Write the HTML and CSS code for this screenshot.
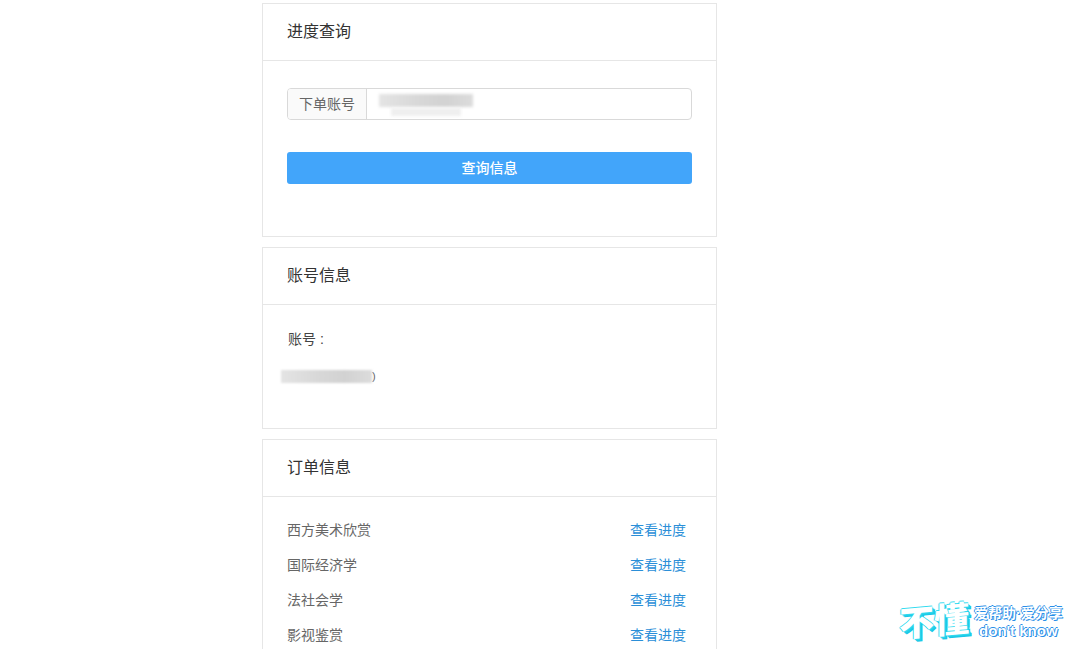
FILE: index.html
```html
<!DOCTYPE html>
<html lang="zh-CN">
<head>
<meta charset="utf-8">
<title>进度查询</title>
<link rel="stylesheet" href="styles.css">
</head>
<body>
<main class="column">
  <section class="card card-query">
    <h2 class="card-head">进度查询</h2>
    <div class="card-body">
      <div class="field">
        <span class="field-label">下单账号</span>
        <div class="field-input">
          <span class="smear smear-a"></span>
          <span class="smear smear-b"></span>
        </div>
      </div>
      <button class="btn" type="button"><span class="btn-text">查询信息</span></button>
    </div>
  </section>
  <section class="card card-account">
    <h2 class="card-head">账号信息</h2>
    <div class="card-body account-body">
      <p class="account-label">账号 :</p>
      <div class="account-value"><span class="smear smear-c"></span><span class="paren">)</span></div>
    </div>
  </section>
  <section class="card card-orders">
    <h2 class="card-head">订单信息</h2>
    <ul class="orders">
      <li class="order"><span>西方美术欣赏</span><a class="link" href="#">查看进度</a></li>
      <li class="order"><span>国际经济学</span><a class="link" href="#">查看进度</a></li>
      <li class="order"><span>法社会学</span><a class="link" href="#">查看进度</a></li>
      <li class="order"><span>影视鉴赏</span><a class="link" href="#">查看进度</a></li>
    </ul>
  </section>
</main>
<aside class="mark">
  <span class="mark-big">不懂</span>
  <span class="mark-side">
    <span class="mark-top">爱帮助·爱分享</span>
    <span class="mark-bottom">don't know</span>
  </span>
</aside>
</body>
</html>
```
FILE: styles.css
```css
* { box-sizing: border-box; }
html, body { height: 649px; overflow: hidden; }
body {
  margin: 0;
  background: #fff;
  color: #333;
  font-family: "Liberation Sans", "Noto Sans CJK SC", sans-serif;
  font-size: 14px;
}
.column {
  width: 455px;
  margin-left: 262px;
  padding-top: 3px;
  display: flex;
  flex-direction: column;
  gap: 10px;
}
.card {
  border: 1px solid #e6e6e6;
  background: #fff;
}
.card-query { height: 234px; }
.card-account { height: 182px; }
.card-orders { min-height: 220px; }
.card-head {
  margin: 0;
  height: 57px;
  padding-left: 24px;
  border-bottom: 1px solid #e6e6e6;
  font-size: 16px;
  font-weight: 400;
  line-height: 55px;
  color: #333;
}
.card-body { padding: 27px 24px 0; }
.field {
  display: flex;
  height: 32px;
  border: 1px solid #d9d9d9;
  border-radius: 4px;
  overflow: hidden;
}
.field-label {
  width: 79px;
  flex: none;
  border-right: 1px solid #d9d9d9;
  background: #fafafa;
  color: #666;
  text-align: center;
  line-height: 30px;
}
.field-input {
  flex: 1;
  position: relative;
}
.smear {
  display: block;
  background: linear-gradient(90deg, #e4e4e4, #d8d8d8 40%, #d2d2d2 70%, #dcdcdc);
  filter: blur(1.5px);
}
.smear-a { position: absolute; left: 12px; top: 5px; width: 94px; height: 13px; }
.smear-b { position: absolute; left: 24px; top: 19px; width: 70px; height: 8px; background: #efefef; }
.btn {
  display: flex;
  align-items: center;
  justify-content: center;
  width: 100%;
  height: 32px;
  margin-top: 32px;
  border: 0;
  border-radius: 3px;
  background: #42a5fa;
  color: #fff;
  font-family: "Noto Sans CJK SC", sans-serif;
  font-size: 14px;
  font-weight: 500;
  padding: 0 0 2px;
}
.btn-text { line-height: 20px; }
.account-body { padding: 24px 0 0 25px; }
.account-label {
  margin: 0;
  line-height: 20px;
  color: #444;
}
.account-value {
  display: flex;
  align-items: center;
  height: 16px;
  margin: 19px 0 0 -7px;
}
.smear-c { width: 91px; height: 13px; filter: blur(1px); }
.paren { font-size: 11px; color: #666; }
.orders {
  list-style: none;
  margin: 0;
  padding: 16px 30px 0 24px;
}
.order {
  display: flex;
  justify-content: space-between;
  height: 35px;
  line-height: 35px;
  color: #666;
}
.link {
  color: #2b8fd8;
  text-decoration: none;
}
.mark {
  position: absolute;
  left: 899px;
  top: 598px;
  display: flex;
  align-items: center;
  gap: 5px;
}
.mark-big {
  font-family: "Noto Sans CJK SC", sans-serif;
  font-size: 35px;
  font-weight: 900;
  line-height: 42px;
  letter-spacing: 0;
  color: #fff;
  transform: skewY(-5deg);
  text-shadow: 1px 1px 0 #2fd9ef, 2px 2px 0 #1fcfe8, 3px 3px 0 #19c6e6, -1px 0 0 #35dcf0, 0 -1px 0 #35dcf0;
}
.mark-side {
  display: flex;
  flex-direction: column;
  align-items: center;
  margin-top: 6px;
}
.mark-top {
  font-size: 14px;
  font-weight: 700;
  line-height: 17px;
  color: #fff;
  white-space: nowrap;
  text-shadow: 1px 1px 0 #2a8fe8, -1px 0 0 #2a8fe8, 0 -1px 0 #2a8fe8;
}
.mark-bottom {
  font-size: 15px;
  font-weight: 700;
  line-height: 18px;
  color: #fff;
  white-space: nowrap;
  text-shadow: 1px 1px 0 #2a8fe8, -1px 0 0 #2a8fe8, 0 -1px 0 #2a8fe8;
}
```
